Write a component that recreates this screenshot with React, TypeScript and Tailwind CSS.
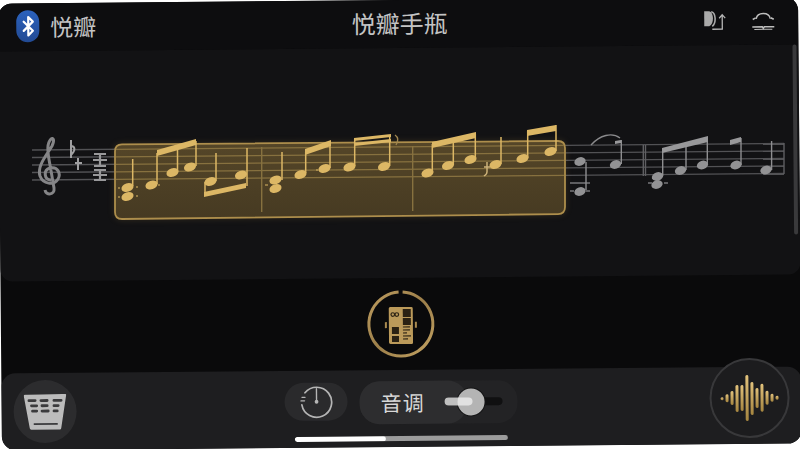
import { Bluetooth } from 'lucide-react';

const GOLD = '#dcb765';
const GREY = '#8e8e90';

// note heads, stems and beams use the coordinates seen on screen
const goldNotes = [
  [127.5, 187.5], [127.5, 196.5], [151.5, 185], [172.5, 172.5], [190, 167], [210.5, 181.5], [241, 175],
  [275.5, 180], [275.5, 188.5], [300.5, 174.5], [324.5, 168.5], [349.5, 167], [384, 166.5],
  [427.5, 173], [448, 165.5], [470.5, 159.5], [495.5, 164.5], [522.5, 158.5], [550.5, 151.5],
];
const goldStems = [
  [132.7, 159, 186], [157, 153, 184], [177.5, 149, 172], [196, 141, 166], [216, 153, 181], [205, 182, 195], [247, 148, 186],
  [282, 152, 180], [305.7, 152, 173], [330, 142, 168], [354.7, 139, 166], [389.7, 135, 166],
  [432.3, 144, 172], [453.3, 139, 165], [475.3, 134, 159], [501, 137, 164], [527.7, 131, 158], [556, 125, 151],
];
const goldBeams = [
  '157,150 196,139 196,145 157,156', '204,192 246,183 246,188 204,197', '305,149 331,140 331,146 305,155',
  '354,138 391,134 391,137 354,141', '354,143 391,139 391,142 354,146', '432,142 476,132 476,138 432,148', '527,130 556,125 556,131 527,136',
];
const greyNotes = [
  [580, 161.5], [580, 191.5], [615.5, 164.5], [657.5, 176.5], [657, 184.5], [680.5, 170.5], [702.5, 165], [736, 165], [766, 170],
];
const greyStems = [
  [586, 162, 190], [621.3, 140, 164], [662.7, 150, 176], [686, 145, 170], [707.3, 138, 165], [741, 138, 165], [771.6, 141, 170],
];

function Score() {
  return (
    <svg viewBox="0 48 800 230" className="h-[230px] w-[800px]" fill="none">
      <defs>
        <linearGradient id="panelFill" x1="0" y1="0" x2="0" y2="1">
          <stop offset="0" stopColor="#554628" />
          <stop offset="1" stopColor="#463a22" />
        </linearGradient>
      </defs>
      <g transform="rotate(0.5 400 223.5)">
        {[0, 1, 2, 3, 4].map((i) => (
          <line key={i} x1="32" y1={150 + i * 7.5} x2="784" y2={143.5 + i * 7.5} stroke="#525255" strokeWidth="1.3" />
        ))}
        <path d="M643.3 145V176M645.5 145V176M784 143V174" stroke="#5f5f62" strokeWidth="1.4" />

        {/* treble clef and key marks */}
        <path d="M51 180C44 180 43 170 50 168C58 166 61 174 58 179C54 186 43 184 40 176C37 166 46 156 52 146C55 140 53 137 51 139C47 143 47 150 50 165L54 188C55 195 46 196 45 190" stroke="#858587" strokeWidth="3" />
        <path d="M71 140V158M71 146C75 146 76 150 71 155M78 158V170M75 163H82" stroke="#a0a0a2" strokeWidth="2" />
        <path d="M94 154H106M100 154V166M93 160H107M94 166H106M94 170H106M100 170V180M93 175H107M94 180H106" stroke="#98989a" strokeWidth="2.200" />

        <path
          d="M122 144.400L558 141Q565 141 565 148V207Q565 214 558 214.100L122 219Q115 219 115 212V151.400Q115 144.400 122 144.400Z"
          fill="url(#panelFill)"
          stroke="#ad8e4c"
          strokeWidth="1.800"
          style={{ filter: 'drop-shadow(0 0 3px rgba(190,150,70,0.18))' }}
        />
        {[0, 1, 2, 3, 4].map((i) => (
          <line key={i} x1="116" y1={149.3 + i * 7.5} x2="564" y2={145.4 + i * 7.5} stroke="#87713f" strokeWidth="1.200" />
        ))}
        <path d="M261.700 147V212M412.700 146V211" stroke="#87713f" strokeWidth="1.400" />

        {goldStems.map(([x, y1, y2], i) => (
          <line key={i} x1={x} y1={y1} x2={x} y2={y2} stroke={GOLD} strokeWidth="1.500" />
        ))}
        {goldBeams.map((p, i) => (
          <polygon key={i} points={p} fill={GOLD} />
        ))}
        {goldNotes.map(([x, y], i) => (
          <ellipse key={i} cx={x} cy={y} rx="6.200" ry="4.200" fill={GOLD} transform={`rotate(-18 ${x} ${y})`} />
        ))}
        <path d="M395 135C398 137 399 140 396 145" stroke="#a08650" strokeWidth="1.300" />
        <path d="M487 162V172M484 167H490M487 172C487 175 485 175 484 176" stroke="#cdb27a" strokeWidth="1.500" />
        <path d="M118 188H120M118 197H120M136 187H138M136 196H138M158 185H160M265 185H268M316 170H318" stroke={GOLD} strokeWidth="1.200" />

        {/* grey part after the highlight */}
        <path d="M591 145C600 135 612 132 620 138" stroke="#8a8a8c" strokeWidth="1.300" />
        <path d="M570 183H590M570 191H574M586 191H590M648 183H652M664 183H668" stroke="#77777a" strokeWidth="1.300" />
        {greyStems.map(([x, y1, y2], i) => (
          <line key={i} x1={x} y1={y1} x2={x} y2={y2} stroke={GREY} strokeWidth="1.400" />
        ))}
        <polygon points="662,148 708,136 708,142 662,153" fill="#98989a" />
        <polygon points="730,140 741,137 741,142 730,145" fill="#98989a" />
        <polygon points="615,141 621,140 621,143 615,144" fill="#98989a" />
        {greyNotes.map(([x, y], i) => (
          <ellipse key={i} cx={x} cy={y} rx="5.800" ry="4.200" fill="#929294" transform={`rotate(-18 ${x} ${y})`} />
        ))}
      </g>
    </svg>
  );
}

function PedalIcon() {
  return (
    <svg viewBox="0 0 70 70" className="h-[70px] w-[70px]" fill="none">
      <defs>
        <linearGradient id="goldRing" x1="0" y1="0" x2="1" y2="1">
          <stop offset="0" stopColor="#bd9c5f" />
          <stop offset="0.5" stopColor="#9c7f4a" />
          <stop offset="1" stopColor="#c4a363" />
        </linearGradient>
      </defs>
      <path d="M37 3.100A32 32 0 1 1 33 3.100" stroke="url(#goldRing)" strokeWidth="3" />
      <rect x="23" y="18" width="24" height="37" rx="1.500" fill="#bb9a5a" />
      <rect x="19" y="33" width="2" height="6" fill="#a98a50" />
      <rect x="49" y="33" width="2" height="6" fill="#a98a50" />
      <rect x="37" y="20" width="8" height="8" fill="#2a2113" />
      <rect x="37" y="29" width="8" height="7" fill="#2a2113" />
      <rect x="26" y="38" width="7" height="7" fill="#2a2113" />
      <rect x="26" y="47" width="7" height="6" fill="#2a2113" />
      <path d="M37 38H44M37 41H44M37 44H41M37 47H45M37 50H42" stroke="#2a2113" strokeWidth="1.200" />
      <circle cx="27" cy="25.500" r="1.800" stroke="#2a2113" strokeWidth="1.200" />
      <circle cx="31" cy="25.500" r="1.800" stroke="#2a2113" strokeWidth="1.200" />
    </svg>
  );
}

function KeyboardIcon() {
  const rows = [
    { y: 5, keys: [[4, 9], [16, 9], [29, 10]] },
    { y: 10.200, keys: [[6.500, 8], [17, 8], [29, 7]] },
    { y: 15.500, keys: [[7.500, 7], [17, 9], [29, 6]] },
  ];
  return (
    <svg viewBox="0 0 43 36" className="h-9 w-[43px]">
      <path d="M1.500 0.500L41.500 0Q43 0 42.600 1.500L37.500 34Q37.200 35.500 36 35.500H7.500Q6.300 35.500 6 34L0.300 2Q0 0.500 1.500 0.500Z" fill="#bcbcbc" />
      {rows.map((r) =>
        r.keys.map(([x, w]) => <rect key={`${r.y}-${x}`} x={x} y={r.y} width={w} height="2.800" rx="1.400" fill="#3a3a3c" />),
      )}
      <rect x="10" y="29" width="24" height="1.800" fill="#3a3a3c" />
    </svg>
  );
}

function GaugeIcon() {
  return (
    <svg viewBox="0 0 34 34" className="h-[34px] w-[34px]" fill="none" stroke="#b5b5b5" strokeWidth="1.700" strokeLinecap="round">
      <path d="M5.500 8A15 15 0 1 1 2.300 20" />
      <path d="M17 4V15" strokeWidth="1.400" />
      <circle cx="17" cy="17" r="1.900" fill="#b5b5b5" stroke="none" />
      <path d="M1.500 16H5M2.500 12.500H5.500" strokeWidth="1.400" />
    </svg>
  );
}

const waveBars = [3, 8, 14, 27, 26, 46, 33, 20, 28, 14, 8, 4];

function Wave() {
  return (
    <div className="flex items-center gap-[2.5px]">
      {waveBars.map((h, i) => (
        <div
          key={i}
          className="w-[2.5px] rounded-full bg-gradient-to-b from-[#e2c27c] to-[#a5853f]"
          style={{ height: h }}
        />
      ))}
    </div>
  );
}

export default function App() {
  return (
    <div className="h-[449px] w-[800px] overflow-hidden bg-white font-['Noto_Sans_CJK_SC','Liberation_Sans',sans-serif]">
      <div className="flex h-[447px] w-[800px] -rotate-[0.5deg] flex-col overflow-hidden rounded-[14px] bg-[#0a0a0b]">
        <header className="grid h-12 shrink-0 grid-cols-3 items-center bg-[#0d0d0f] px-[18px] pb-[2px] text-[#c4c4c4]">
          <div className="flex items-center gap-[11px]">
            <div className="flex h-8 w-[23px] items-center justify-center rounded-full bg-gradient-to-b from-[#2b62bd] to-[#224a94]">
              <Bluetooth className="h-[22px] w-[22px] text-white" strokeWidth={2.4} />
            </div>
            <span className="text-[23px] leading-none">悦瓣</span>
          </div>
          <h1 className="pl-[3px] text-center text-[24px] leading-none font-normal">悦瓣手瓶</h1>
          <div className="flex items-center justify-end gap-[24px] pr-[5px]">
            <svg viewBox="0 0 24 22" className="h-[22px] w-6" fill="none">
              <path d="M1 2H6C11 3 11 15 6 17H1Z" fill="#a9a9a9" />
              <path d="M8 2.500C13 3.500 13 14 9 17" stroke="#a9a9a9" strokeWidth="1.600" />
              <path d="M9 20H19V6M16 9L19 5.500L22 9" stroke="#b5b5b5" strokeWidth="1.300" />
            </svg>
            <svg viewBox="0 0 24 22" className="h-[22px] w-6" fill="none" stroke="#bdbdbd">
              <path d="M5 10C6 3 18 3 19 10" strokeWidth="1.400" />
              <path d="M1.500 10.500L4.500 9M22.500 10.500L19.500 9" strokeWidth="1.600" />
              <path d="M1 18H11L12 19.500L13 18H23" strokeWidth="1.500" />
              <path d="M3 20.500H21" strokeWidth="1" />
            </svg>
          </div>
        </header>

        <main className="relative h-[230px] shrink-0 rounded-b-[12px] bg-[#121214]">
          <Score />
          <div className="absolute top-0 right-[2px] h-[190px] w-1 rounded-full bg-[#39393b]" />
        </main>

        <section className="flex h-[92px] shrink-0 items-center justify-center">
          <PedalIcon />
        </section>

        <footer className="relative flex h-[77px] shrink-0 items-start rounded-[14px] bg-[#1e1e20]">
          <button className="mt-[7px] ml-3 flex h-[63px] w-[63px] items-center justify-center rounded-full bg-[#2c2c2e]">
            <KeyboardIcon />
          </button>
          <button className="mt-3 ml-[208px] flex h-[38px] w-[63px] items-center justify-center rounded-[19px] bg-[#2a2a2c]">
            <GaugeIcon />
          </button>
          <div className="relative mt-[11px] ml-3 h-[43px] w-[158px] rounded-[20px] bg-[#232325]">
            <div className="flex h-full w-[108px] items-center rounded-[20px] bg-[#2d2d2f] pl-[21px] text-[21px] leading-none tracking-[1px] text-[#d8d8d8]">
              音调
            </div>
            <div className="absolute top-[17px] left-[85px] h-2 w-[58px] rounded-full bg-[#101011]" />
            <div className="absolute top-2 left-[98px] h-[27px] w-[27px] rounded-full bg-[#b4b4b4] ring-1 ring-[#161617]" />
            <div className="absolute top-[17px] left-[85px] h-2 w-7 rounded-full bg-[#ececec]/80" />
          </div>
          <button className="-mt-[9px] mr-3 ml-auto flex h-20 w-20 items-center justify-center rounded-full border-2 border-[#38383a] bg-[#1c1c1e]">
            <Wave />
          </button>
          <div className="absolute bottom-[6px] left-[293px] flex h-[5px] w-[213px] overflow-hidden rounded-full bg-[#9c9c9c]">
            <div className="h-full w-[91px] rounded-full bg-white" />
          </div>
        </footer>
      </div>
    </div>
  );
}
